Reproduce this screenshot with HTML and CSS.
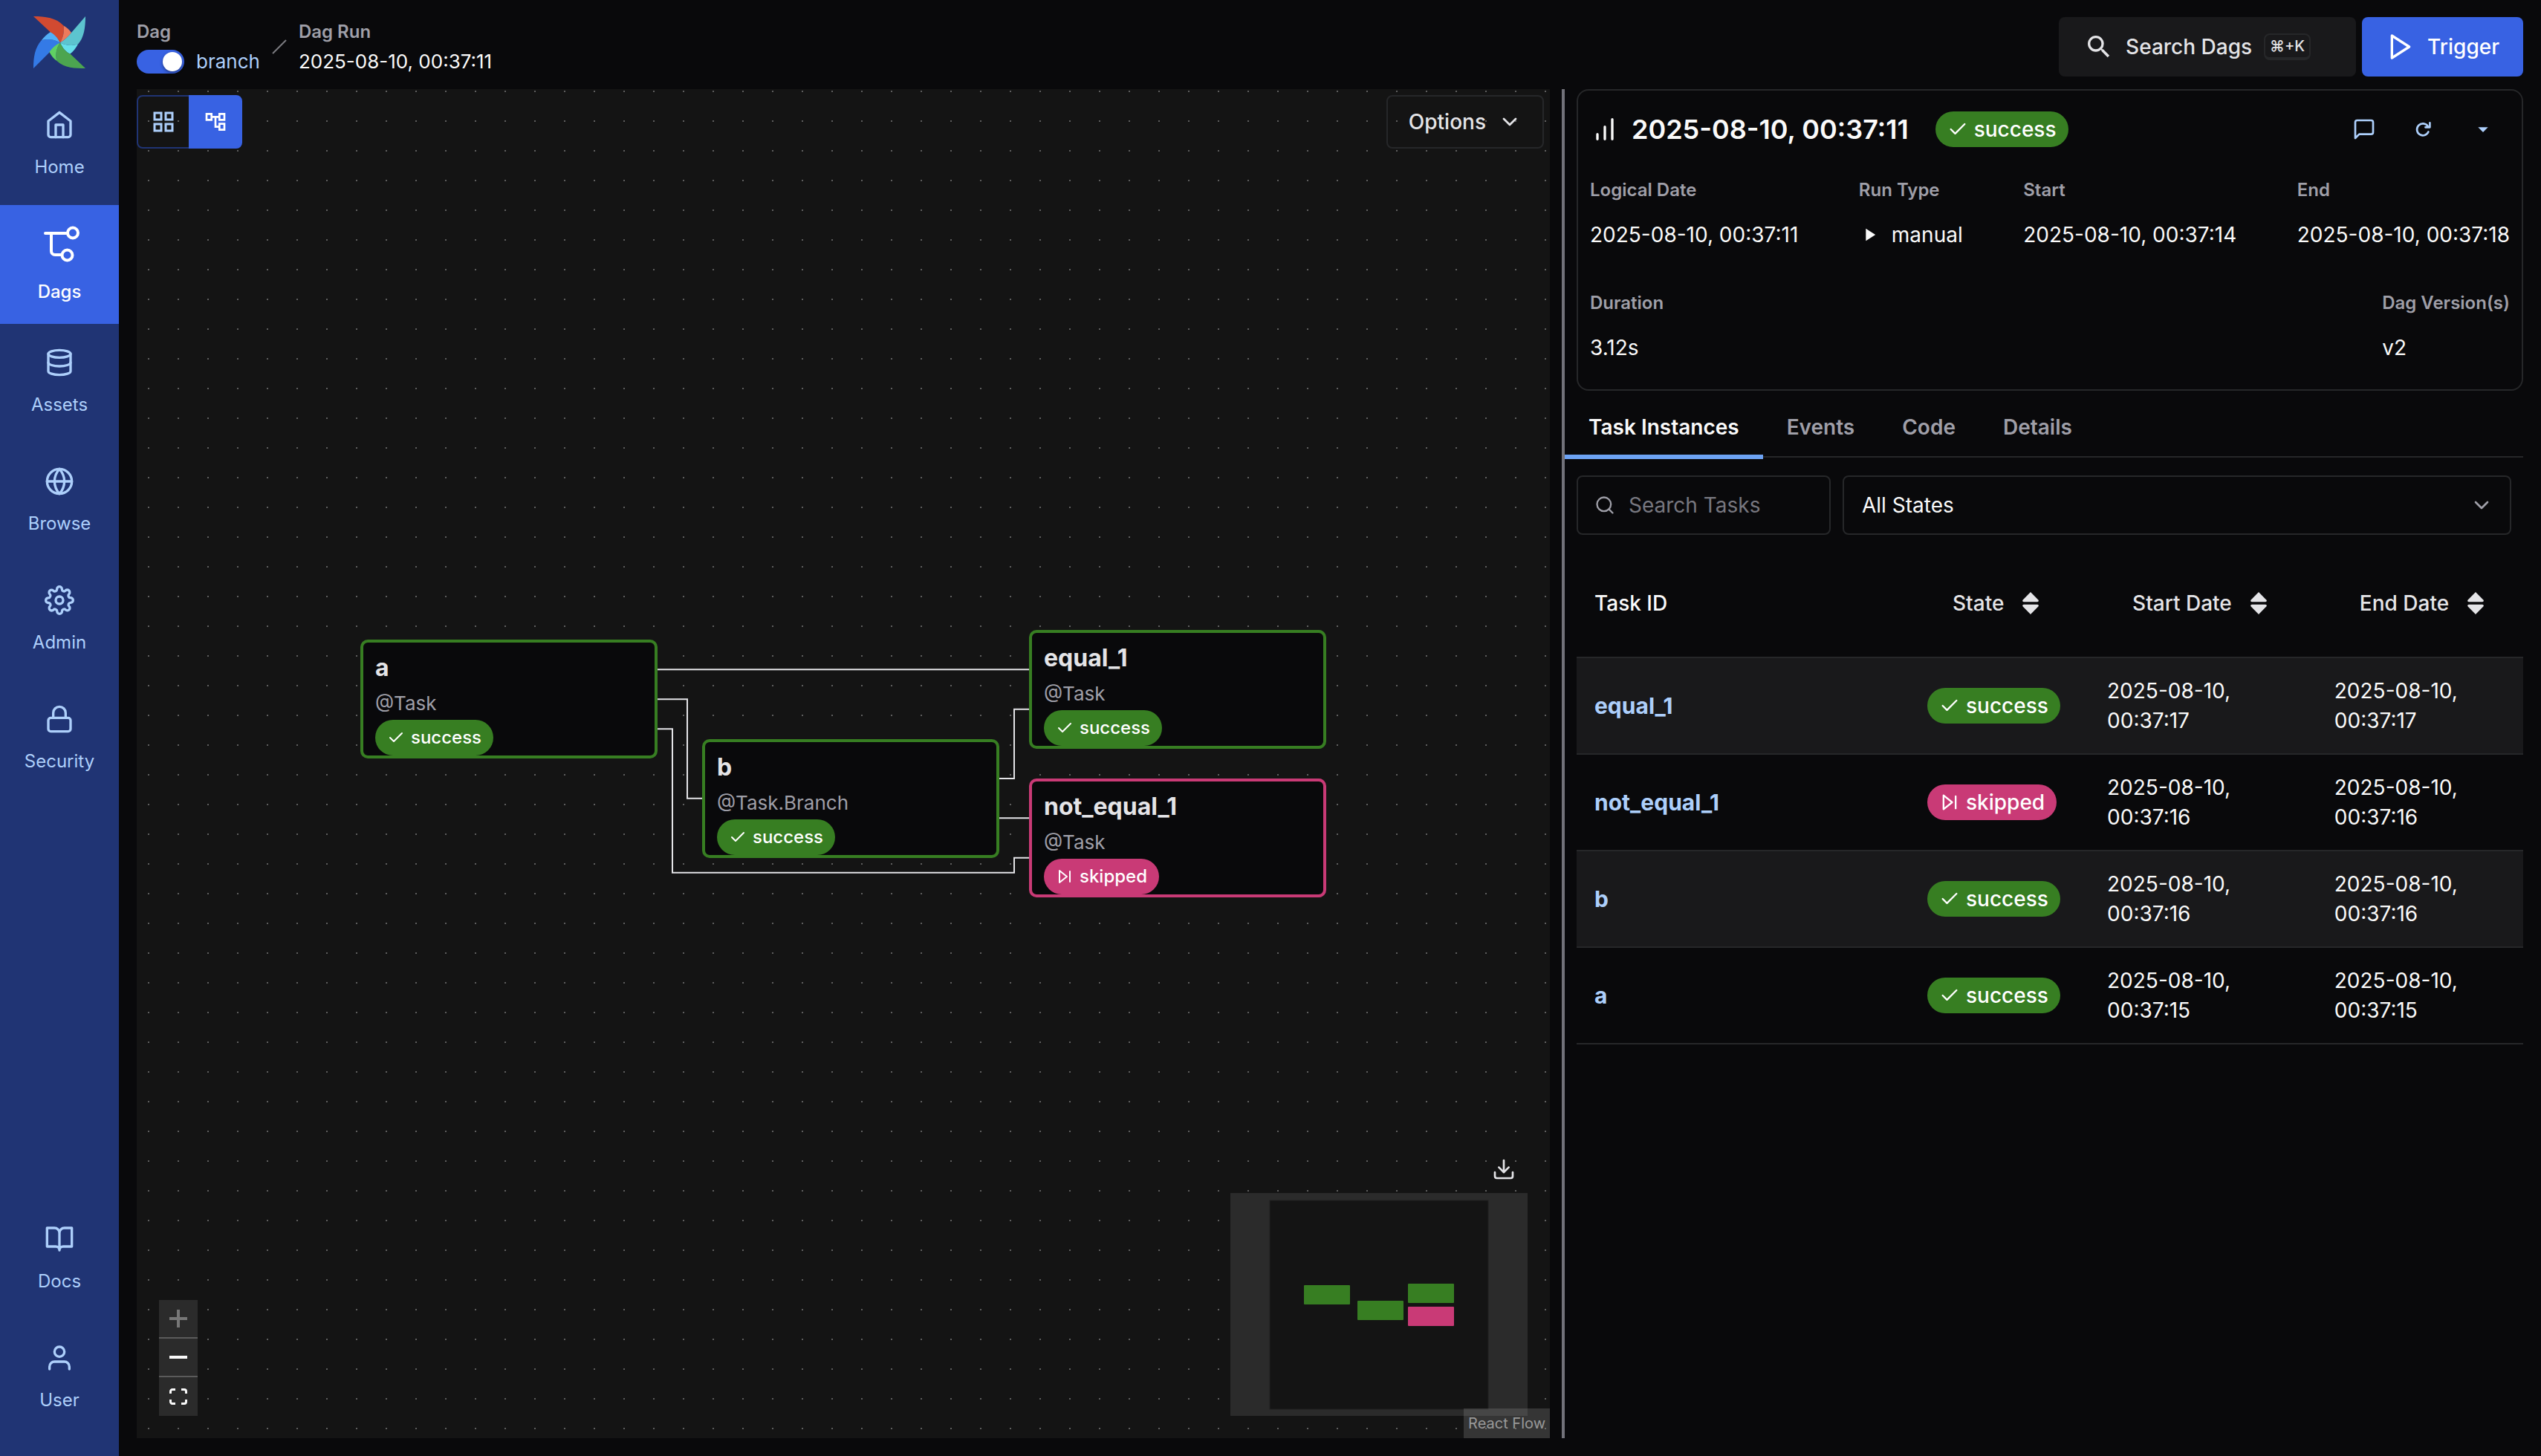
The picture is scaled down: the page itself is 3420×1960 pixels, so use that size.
FILE: index.html
```html
<!DOCTYPE html>
<html lang="en">
<head>
<meta charset="utf-8">
<title>branch - Dag Run - Airflow</title>
<link rel="stylesheet" href="styles.css">
</head>
<body>
<svg class="sprite" aria-hidden="true">
  <symbol id="check" viewBox="0 0 24 24"><polyline points="20 6 9 17 4 12"/></symbol>
  <symbol id="skip" viewBox="0 0 24 24"><polygon points="5 4 15 12 5 20 5 4"/><line x1="19" y1="5" x2="19" y2="19"/></symbol>
  <symbol id="chevron" viewBox="0 0 24 24"><polyline points="6 9 12 15 18 9"/></symbol>
  <symbol id="sort" viewBox="0 0 24 24"><path d="M18.2 9.3l-6.2-6.3-6.2 6.3c-.2.2-.3.4-.3.7s.1.5.3.7c.2.2.4.3.7.3h11c.3 0 .5-.1.7-.3.2-.2.3-.5.3-.7s-.1-.5-.3-.7zM5.8 14.7l6.2 6.3 6.2-6.3c.2-.2.3-.5.3-.7s-.1-.5-.3-.7c-.2-.2-.4-.3-.7-.3h-11c-.3 0-.5.1-.7.3-.2.2-.3.5-.3.7s.1.5.3.7z"/></symbol>
</svg>
<div class="app">
  <nav class="sidebar" aria-label="Main">
    <a class="logo" href="#" aria-label="Airflow">
      <svg viewBox="0 0 70 70">
        <path fill="#347ae6" d="M0 70 L22 48 L36 35.500 C28 31 19 30 10.800 32.300 C2 42 0 55 0 70Z"/>
        <path fill="#52aff8" d="M10.800 32.300 C14 28 18 24 23 21 C29 24 33 29 36 35.500 C28 31 19 30 10.800 32.300Z"/>
        <path fill="#d14a31" d="M0 0 L22.500 21 C28 24 33 29 36 35.500 C40 28 42 20 40.500 12.500 C31 2 16 0 0 0Z"/>
        <path fill="#ed7a5c" d="M40.500 12.500 C45 15 48.500 18 51 22 C47 27 42 32 36 35.500 C40 28 42 20 40.500 12.500Z"/>
        <path fill="#5cc4cf" d="M70 0 L51 22 C47 27 42 32 36 35.500 C43 39 52 40 60 37.500 C68 29 70 15 70 0Z"/>
        <path fill="#66dfea" d="M60 37.500 C57 43 54 47 49.500 50.500 C43 48 39 42 36 35.500 C43 39 52 40 60 37.500Z"/>
        <path fill="#4ca550" d="M70 70 L49.500 50.500 C43 48 39 42 36 35.500 C31 42 29 52 31.500 60 C42 70 56 70 70 70Z"/>
        <path fill="#60d063" d="M31.500 60 C27 57 24 53 21.500 48 C26 42 30 38 36 35.500 C31 42 29 52 31.500 60Z"/>
      </svg>
    </a>
    <a class="nav-item" href="#"><svg class="icon icon-lg" viewBox="0 0 24 24"><path d="M3 9l9-7 9 7v11a2 2 0 0 1-2 2H5a2 2 0 0 1-2-2z"/><polyline points="9 22 9 12 15 12 15 22"/></svg>Home</a>
    <a class="nav-item active" href="#" aria-current="page"><svg class="icon dag-icon" viewBox="0 0 56 56"><path d="M9 14H37M17 14V38a5 5 0 0 0 5 5H30"/><circle cx="46" cy="13.500" r="7"/><circle cx="38.500" cy="43.500" r="7"/></svg>Dags</a>
    <a class="nav-item" href="#"><svg class="icon icon-lg" viewBox="0 0 24 24"><ellipse cx="12" cy="5" rx="9" ry="3"/><path d="M21 12c0 1.660-4 3-9 3s-9-1.340-9-3"/><path d="M3 5v14c0 1.660 4 3 9 3s9-1.340 9-3V5"/></svg>Assets</a>
    <a class="nav-item" href="#"><svg class="icon icon-lg" viewBox="0 0 24 24"><circle cx="12" cy="12" r="10"/><path d="M2 12h20M12 2a15.300 15.300 0 0 1 4 10 15.300 15.300 0 0 1-4 10 15.300 15.300 0 0 1-4-10 15.300 15.300 0 0 1 4-10z"/></svg>Browse</a>
    <a class="nav-item" href="#"><svg class="icon icon-lg" viewBox="0 0 24 24"><circle cx="12" cy="12" r="3"/><path d="M19.400 15a1.650 1.650 0 0 0 .33 1.820l.06.06a2 2 0 0 1 0 2.830 2 2 0 0 1-2.830 0l-.06-.06a1.650 1.650 0 0 0-1.820-.33 1.650 1.650 0 0 0-1 1.510V21a2 2 0 0 1-2 2 2 2 0 0 1-2-2v-.09A1.650 1.650 0 0 0 9 19.400a1.650 1.650 0 0 0-1.820.33l-.06.06a2 2 0 0 1-2.830 0 2 2 0 0 1 0-2.830l.06-.06a1.650 1.650 0 0 0 .33-1.820 1.650 1.650 0 0 0-1.510-1H3a2 2 0 0 1-2-2 2 2 0 0 1 2-2h.09A1.650 1.650 0 0 0 4.600 9a1.650 1.650 0 0 0-.33-1.820l-.06-.06a2 2 0 0 1 0-2.830 2 2 0 0 1 2.830 0l.06.06a1.650 1.650 0 0 0 1.820.33H9a1.650 1.650 0 0 0 1-1.510V3a2 2 0 0 1 2-2 2 2 0 0 1 2 2v.09a1.650 1.650 0 0 0 1 1.510 1.650 1.650 0 0 0 1.820-.33l.06-.06a2 2 0 0 1 2.830 0 2 2 0 0 1 0 2.830l-.06.06a1.650 1.650 0 0 0-.33 1.820V9a1.650 1.650 0 0 0 1.510 1H21a2 2 0 0 1 2 2 2 2 0 0 1-2 2h-.09a1.650 1.650 0 0 0-1.510 1z"/></svg>Admin</a>
    <a class="nav-item" href="#"><svg class="icon icon-lg" viewBox="0 0 24 24"><rect x="3" y="11" width="18" height="11" rx="2"/><path d="M7 11V7a5 5 0 0 1 10 0v4"/></svg>Security</a>
    <a class="nav-item push" href="#"><svg class="icon icon-lg" viewBox="0 0 24 24"><path d="M2 3h6a4 4 0 0 1 4 4v14a3 3 0 0 0-3-3H2zM22 3h-6a4 4 0 0 0-4 4v14a3 3 0 0 1 3-3h7z"/></svg>Docs</a>
    <a class="nav-item" href="#"><svg class="icon icon-lg" viewBox="0 0 24 24"><path d="M20 21v-2a4 4 0 0 0-4-4H8a4 4 0 0 0-4 4v2"/><circle cx="12" cy="7" r="4"/></svg>User</a>
  </nav>

  <main class="page">
    <header class="topbar">
      <div class="crumbs">
        <div class="crumb">
          <span class="crumb-label">Dag</span>
          <span class="crumb-value"><input class="switch" type="checkbox" role="switch" checked aria-label="Unpause branch"><a href="#">branch</a></span>
        </div>
        <svg class="slash" viewBox="0 0 20 20" aria-hidden="true"><path d="M1 19L19 1"/></svg>
        <div class="crumb">
          <span class="crumb-label">Dag Run</span>
          <span class="crumb-value">2025-08-10, 00:37:11</span>
        </div>
      </div>
      <div class="actions">
        <button class="btn search-btn" type="button">
          <svg class="icon-lg glyph" viewBox="0 0 24 24"><path d="M15.500 14h-.79l-.28-.27A6.471 6.471 0 0 0 16 9.500 6.500 6.500 0 1 0 9.500 16c1.610 0 3.090-.59 4.230-1.570l.27.28v.79l5 4.990L20.490 19l-4.990-5zm-6 0C7.010 14 5 11.990 5 9.500S7.010 5 9.500 5 14 7.010 14 9.500 11.990 14 9.500 14z"/></svg>
          Search Dags <kbd>⌘+K</kbd>
        </button>
        <button class="btn trigger-btn" type="button">
          <svg class="icon icon-lg" viewBox="0 0 24 24"><polygon points="5 3 19 12 5 21 5 3"/></svg>
          Trigger
        </button>
      </div>
    </header>

    <div class="split">
      <section class="canvas" aria-label="Graph">
        <svg class="dots" aria-hidden="true">
          <defs><pattern id="grid" width="40" height="40" patternUnits="userSpaceOnUse"><circle cx="16" cy="3" r="1" fill="#777"/></pattern></defs>
          <rect width="100%" height="100%" fill="url(#grid)"/>
        </svg>
        <div class="canvas-bar">
          <div class="view-toggle">
            <button type="button" aria-label="Grid view"><svg class="glyph" width="36" height="36" viewBox="0 0 24 24"><path fill-rule="evenodd" d="M3 3v8h8V3H3zm6 6H5V5h4v4zm-6 4v8h8v-8H3zm6 6H5v-4h4v4zm4-16v8h8V3h-8zm6 6h-4V5h4v4zm-6 4v8h8v-8h-8zm6 6h-4v-4h4v4z"/></svg></button>
            <button class="selected" type="button" aria-label="Graph view"><svg class="glyph" width="32" height="32" viewBox="0 0 24 24"><path d="M22 11V3h-7v3H9V3H2v8h7V8h2v10h4v3h7v-8h-7v3h-2V8h2v3h7zM7 9H4V5h3v4zm10 6h3v4h-3v-4zm0-10h3v4h-3V5z"/></svg></button>
          </div>
          <button class="btn options-btn" type="button">Options <svg class="icon icon-md"><use href="#chevron"/></svg></button>
        </div>

        <div class="graph">
          <svg class="edges" viewBox="0 0 1300 360" aria-hidden="true">
            <path d="M400 53.300H900M400 93.300H440V226.700H460M400 133.300H420V326.700H880V306.700H900M860 200H880V106.700H900M860 253.300H900"/>
          </svg>
          <article class="node node-a">
            <h3>a</h3><p>@Task</p>
            <span class="badge"><svg class="icon"><use href="#check"/></svg>success</span>
          </article>
          <article class="node node-b">
            <h3>b</h3><p>@Task.Branch</p>
            <span class="badge"><svg class="icon"><use href="#check"/></svg>success</span>
          </article>
          <article class="node node-equal">
            <h3>equal_1</h3><p>@Task</p>
            <span class="badge"><svg class="icon"><use href="#check"/></svg>success</span>
          </article>
          <article class="node node-not-equal skipped">
            <h3>not_equal_1</h3><p>@Task</p>
            <span class="badge skipped"><svg class="icon"><use href="#skip"/></svg>skipped</span>
          </article>
        </div>

        <div class="canvas-foot">
          <div class="zoom">
            <button type="button" aria-label="Zoom in" disabled><svg width="24" height="24" viewBox="0 0 24 24"><path d="M0 12H24M12 0V24"/></svg></button>
            <button type="button" aria-label="Zoom out"><svg width="24" height="24" viewBox="0 0 24 24"><path d="M0 12H24"/></svg></button>
            <button type="button" aria-label="Fit view"><svg width="24" height="24" viewBox="0 0 24 24"><path class="fit" d="M1.500 8V5a2.500 2.500 0 0 1 2.500-2.500H8M16 2.500H20a2.500 2.500 0 0 1 2.500 2.500V8M22.500 16V19a2.500 2.500 0 0 1-2.500 2.500H16M8 21.500H4a2.500 2.500 0 0 1-2.500-2.500V16"/></svg></button>
          </div>
          <div class="map-col">
            <button class="download" type="button" aria-label="Download graph"><svg class="icon icon-md" viewBox="0 0 24 24"><path d="M21 15v4a2 2 0 0 1-2 2H5a2 2 0 0 1-2-2v-4"/><polyline points="7 10 12 15 17 10"/><line x1="12" y1="15" x2="12" y2="3"/></svg></button>
            <svg class="minimap" viewBox="0 0 400 300" role="img" aria-label="Mini map">
              <rect width="400" height="300" fill="#2b2b2b"/>
              <rect x="53" y="10" width="294" height="281" fill="#141414" stroke="#202020"/>
              <g fill="#377e22"><rect x="99" y="124" width="62" height="26" rx="1"/><rect x="171" y="145" width="62" height="26" rx="1"/><rect x="239" y="122" width="62" height="26" rx="1"/></g>
              <rect x="239" y="153" width="62" height="26" rx="1" fill="#c93a76"/>
            </svg>
          </div>
        </div>
        <a class="attribution" href="#">React Flow</a>
      </section>

      <div class="handle" role="separator" aria-orientation="vertical"></div>

      <section class="details" aria-label="Run details">
        <div class="card">
          <div class="card-head">
            <svg class="icon icon-lg" viewBox="0 0 24 24"><path d="M12 20V10M18 20V4M6 20v-4"/></svg>
            <h1>2025-08-10, 00:37:11</h1>
            <span class="badge"><svg class="icon"><use href="#check"/></svg>success</span>
            <div class="card-actions">
              <button type="button" aria-label="Add a note"><svg class="icon icon-md" viewBox="0 0 24 24"><path d="M21 15a2 2 0 0 1-2 2H7l-4 4V5a2 2 0 0 1 2-2h14a2 2 0 0 1 2 2z"/></svg></button>
              <button type="button" aria-label="Clear run"><svg class="icon icon-md" viewBox="0 0 24 24"><path d="M16.800 14.600A6 6 0 1 1 16.200 8.800M18.300 5.500V10H13.800"/></svg></button>
              <button type="button" aria-label="Mark run as"><svg class="glyph icon-md" viewBox="0 0 24 24"><path d="M7 10l5 5 5-5z"/></svg></button>
            </div>
          </div>
          <dl class="stats">
            <div><dt>Logical Date</dt><dd>2025-08-10, 00:37:11</dd></div>
            <div><dt>Run Type</dt><dd class="run-type"><svg class="glyph" width="28" height="28" viewBox="0 0 24 24"><path d="M8 5v14l11-7z"/></svg>manual</dd></div>
            <div><dt>Start</dt><dd>2025-08-10, 00:37:14</dd></div>
            <div><dt>End</dt><dd>2025-08-10, 00:37:18</dd></div>
            <div><dt>Duration</dt><dd>3.12s</dd></div>
            <div><dt>Dag Version(s)</dt><dd>v2</dd></div>
          </dl>
        </div>

        <div class="tabs" role="tablist">
          <button class="selected" type="button" role="tab" aria-selected="true">Task Instances</button>
          <button type="button" role="tab">Events</button>
          <button type="button" role="tab">Code</button>
          <button type="button" role="tab">Details</button>
        </div>

        <div class="filters">
          <label class="search-field">
            <svg class="icon" viewBox="0 0 24 24" width="28" height="28"><circle cx="11" cy="11" r="8"/><line x1="21" y1="21" x2="16.650" y2="16.650"/></svg>
            <input type="text" placeholder="Search Tasks" aria-label="Search Tasks">
          </label>
          <label class="select-field">
            <select aria-label="State"><option>All States</option></select>
            <svg class="icon icon-md"><use href="#chevron"/></svg>
          </label>
        </div>

        <table class="tasks">
          <colgroup><col class="col-id"><col class="col-state"><col class="col-start"><col class="col-end"></colgroup>
          <thead>
            <tr>
              <th>Task ID</th>
              <th><button class="btn" type="button">State <svg class="glyph icon-lg"><use href="#sort"/></svg></button></th>
              <th><button class="btn" type="button">Start Date <svg class="glyph icon-lg"><use href="#sort"/></svg></button></th>
              <th><button class="btn" type="button">End Date <svg class="glyph icon-lg"><use href="#sort"/></svg></button></th>
            </tr>
          </thead>
          <tbody>
            <tr><td><a href="#">equal_1</a></td><td><span class="badge"><svg class="icon"><use href="#check"/></svg>success</span></td><td>2025-08-10, 00:37:17</td><td>2025-08-10, 00:37:17</td></tr>
            <tr><td><a href="#">not_equal_1</a></td><td><span class="badge skipped"><svg class="icon"><use href="#skip"/></svg>skipped</span></td><td>2025-08-10, 00:37:16</td><td>2025-08-10, 00:37:16</td></tr>
            <tr><td><a href="#">b</a></td><td><span class="badge"><svg class="icon"><use href="#check"/></svg>success</span></td><td>2025-08-10, 00:37:16</td><td>2025-08-10, 00:37:16</td></tr>
            <tr><td><a href="#">a</a></td><td><span class="badge"><svg class="icon"><use href="#check"/></svg>success</span></td><td>2025-08-10, 00:37:15</td><td>2025-08-10, 00:37:15</td></tr>
          </tbody>
        </table>
      </section>
    </div>
  </main>
</div>
</body>
</html>
```

FILE: styles.css
```css
:root {
  --bg: #09090b;
  --surface: #19191b;
  --canvas: #141414;
  --line: #262729;
  --text: #fafafa;
  --text-soft: #e4e4e7;
  --muted: #9f9fa8;
  --navy: #203474;
  --blue: #3862e3;
  --sky: #adcffb;
  --green: #377e22;
  --pink: #c93a76;
}

* { box-sizing: border-box; }

body {
  margin: 0;
  background: var(--bg);
  color: var(--text);
  font: 400 28px/40px Inter, "Liberation Sans", sans-serif;
}

h1, h3, p, dl, dd { margin: 0; }
a { color: var(--sky); text-decoration: none; }
button, input, select { font: inherit; color: inherit; }
button { padding: 0; border: 0; background: none; }
svg { display: block; flex: none; }

.sprite { position: absolute; width: 0; height: 0; }

.icon { fill: none; stroke: currentColor; stroke-width: 2; stroke-linecap: round; stroke-linejoin: round; }
.glyph { fill: currentColor; }
.icon-md { width: 32px; height: 32px; }
.icon-lg { width: 40px; height: 40px; }

.app { display: flex; min-height: 100vh; }

/* Sidebar */
.sidebar {
  display: flex;
  flex-direction: column;
  flex: none;
  width: 160px;
  padding-bottom: 24px;
  background: var(--navy);
}
.logo { height: 116px; padding: 22px 45px; }
.logo svg { width: 70px; height: 70px; }
.nav-item {
  display: flex;
  flex-direction: column;
  align-items: center;
  gap: 20px;
  height: 160px;
  padding-top: 32px;
  font-size: 24px;
  line-height: 34px;
}
.nav-item.active { padding-top: 24px; background: var(--blue); color: #fff; font-weight: 500; }
.dag-icon { width: 56px; height: 56px; stroke-width: 4; }
.push { margin-top: auto; }

/* Page */
.page { display: flex; flex-direction: column; flex: 1; min-width: 0; padding: 0 24px 24px; }
.topbar { display: flex; justify-content: space-between; align-items: center; padding: 23px 0 17px; }
.crumbs { display: flex; align-items: center; gap: 16px; }
.crumb { display: flex; flex-direction: column; }
.crumb-label { color: var(--muted); font-size: 24px; font-weight: 600; }
.crumb-value { display: flex; align-items: center; gap: 16px; font-size: 26px; }
.slash { width: 20px; height: 20px; fill: none; stroke: #7c7c82; stroke-width: 2; }

.switch {
  appearance: none;
  display: flex;
  justify-content: flex-end;
  width: 64px;
  height: 32px;
  margin: 0;
  padding: 3px;
  border-radius: 16px;
  background: var(--blue);
}
.switch::before { content: ""; width: 26px; height: 26px; border-radius: 50%; background: #fff; box-shadow: 0 2px 4px rgb(0 0 0 / 40%); }

.actions { display: flex; gap: 8px; }
.btn {
  display: flex;
  align-items: center;
  gap: 16px;
  height: 80px;
  padding: 0 34px;
  border-radius: 8px;
  color: var(--text-soft);
  font-weight: 500;
  white-space: nowrap;
}
.search-btn { width: 400px; background: var(--surface); }
.trigger-btn { padding: 0 32px; background: var(--blue); color: #fff; }
kbd {
  padding: 0 6px;
  border: 2px solid var(--line);
  border-bottom-width: 4px;
  border-radius: 8px;
  font: 500 20px/30px Inter, "DejaVu Sans", sans-serif;
}

.split { display: grid; grid-template-columns: minmax(0, 1902fr) 20px minmax(0, 1290fr); flex: 1; }
.handle { margin-left: 16px; background: #72727a; }

/* Graph canvas */
.canvas { position: relative; display: flex; flex-direction: column; justify-content: space-between; background: var(--canvas); }
.canvas > * { position: relative; }
.canvas > .dots { position: absolute; inset: 0; width: 100%; height: 100%; }
.canvas-bar { display: flex; justify-content: space-between; padding: 8px 8px 0 0; }
.view-toggle { display: flex; }
.view-toggle button { display: flex; align-items: center; justify-content: center; width: 72px; height: 72px; border: 2px solid var(--navy); border-radius: 8px 0 0 8px; color: var(--sky); }
.view-toggle .selected { margin-left: -2px; border-color: var(--blue); border-radius: 0 8px 8px 0; background: var(--blue); color: #fff; }
.options-btn { height: 72px; padding: 0 28px; border: 2px solid var(--line); }

.canvas > .graph { position: absolute; inset: 0; width: 1300px; height: 360px; margin: auto; }
.edges { width: 100%; height: 100%; fill: none; stroke: var(--text-soft); stroke-width: 2; }
.node {
  position: absolute;
  width: 400px;
  height: 160px;
  padding: 14px 16px 0;
  border: 4px solid var(--green);
  border-radius: 10px;
  background: var(--bg);
  color: var(--text-soft);
}
.node.skipped { border-color: var(--pink); }
.node h3 { font-size: 32px; line-height: 40px; font-weight: 700; }
.node p { margin-top: 8px; color: var(--muted); font-size: 26px; line-height: 40px; }
.node .badge { margin-top: 2px; font-size: 24px; }
.node-a { left: 0; top: 13px; }
.node-b { left: 460px; top: 147px; }
.node-equal { left: 900px; top: 0; }
.node-not-equal { left: 900px; top: 200px; }

.badge {
  display: flex;
  align-items: center;
  gap: 8px;
  width: max-content;
  height: 48px;
  padding: 0 16px;
  border-radius: 24px;
  background: var(--green);
  color: #fff;
  font-size: 28px;
  font-weight: 500;
}
.badge.skipped { background: var(--pink); }
.badge .icon { width: 1em; height: 1em; }

.canvas-foot { display: flex; justify-content: space-between; align-items: flex-end; padding: 0 30px 30px; }
.zoom button { display: flex; align-items: center; justify-content: center; width: 52px; height: 52px; border-bottom: 2px solid #5b5b5b; background: #2b2b2b; }
.zoom button:last-child { border-bottom: 0; }
.zoom svg { fill: none; stroke: currentColor; stroke-width: 4; }
.zoom .fit { stroke-width: 3; }
.zoom button:disabled { color: #777; }
.map-col { display: flex; flex-direction: column; align-items: flex-end; gap: 16px; }
.download { padding: 0 16px; color: var(--text-soft); }
.minimap { width: 400px; height: 300px; }
.canvas > .attribution {
  position: absolute;
  right: 0;
  bottom: 0;
  padding: 4px 6px;
  background: rgb(150 150 150 / 25%);
  color: #999;
  font-size: 20px;
  line-height: 32px;
}

/* Run details */
.card { margin-left: 16px; padding: 16px 16px 36px; border: 2px solid var(--line); border-radius: 16px; }
.card-head { display: flex; align-items: center; gap: 16px; height: 72px; }
.card-head h1 { margin-right: 20px; font-size: 36px; line-height: 48px; font-weight: 600; }
.card-actions { display: flex; gap: 8px; margin-left: auto; color: var(--sky); }
.card-actions button { display: flex; align-items: center; justify-content: center; width: 72px; height: 72px; }
.stats { display: flex; flex-wrap: wrap; justify-content: space-between; gap: 52px 64px; margin-top: 26px; }
.stats dt { color: var(--muted); font-size: 24px; font-weight: 600; }
.stats dd { margin-top: 20px; }
.run-type { display: flex; align-items: center; gap: 16px; }

.tabs { display: flex; margin-top: 8px; border-bottom: 2px solid var(--line); }
.tabs button { height: 84px; margin-bottom: -4px; padding: 4px 32px 0; border-bottom: 6px solid transparent; color: var(--muted); font-weight: 600; }
.tabs .selected { border-color: #6da3f4; color: var(--text); }

.filters { display: flex; gap: 16px; margin-top: 24px; padding: 0 16px; }
.search-field, .select-field { display: flex; align-items: center; position: relative; height: 80px; border: 2px solid var(--line); border-radius: 8px; }
.search-field { gap: 18px; width: 342px; padding: 0 22px; color: var(--muted); }
.search-field input { flex: 1; min-width: 0; padding: 0; border: 0; outline: 0; background: none; }
.search-field input::placeholder { color: #77777f; opacity: 1; }
.select-field { flex: 1; }
.select-field select { appearance: none; width: 100%; height: 100%; padding: 0 24px; border: 0; background: none; }
.select-field .icon { position: absolute; right: 22px; color: var(--muted); pointer-events: none; }

.tasks { width: calc(100% - 16px); margin: 20px 0 0 16px; border-collapse: separate; border-spacing: 0; table-layout: fixed; }
.col-id { width: 448px; }
.col-state { width: 19%; }
.col-start { width: 24%; }
.tasks th { height: 146px; padding: 0 24px; border-bottom: 2px solid var(--line); text-align: left; font-weight: 500; }
.tasks td { padding: 24px; border-bottom: 2px solid var(--line); }
.tasks tbody tr:nth-child(odd) { background: var(--surface); }
.tasks td a { font-size: 30px; font-weight: 700; }
```
